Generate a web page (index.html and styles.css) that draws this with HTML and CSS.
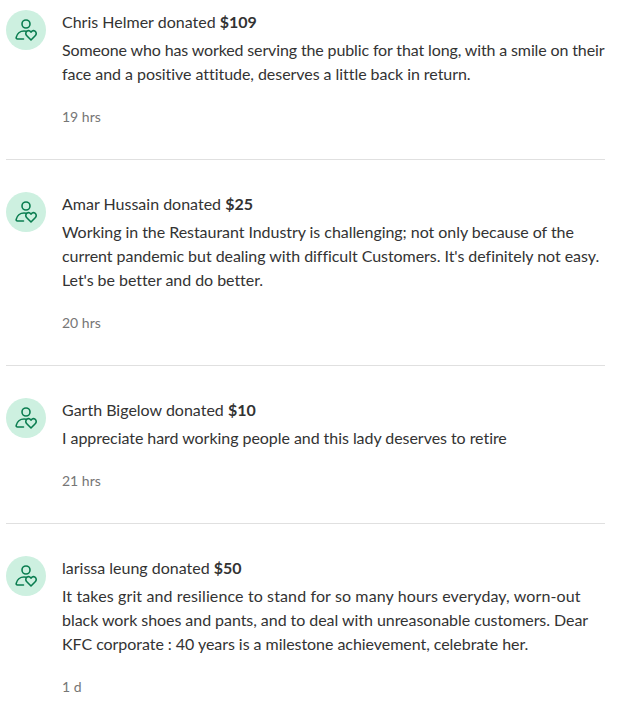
FILE: index.html
```html
<!DOCTYPE html>
<html lang="en">
<head>
    <meta charset="UTF-8">
    <title>Donations</title>
    <link rel="stylesheet" href="styles.css">
</head>
<body>
    <svg class="icon-defs" width="0" height="0">
        <symbol id="donor" viewBox="0 0 40 40">
            <circle cx="20" cy="14" r="4" />
            <path d="M17.500 29H11.500c-1 0-1.500-.7-1.300-1.600.8-3.600 3.900-6.400 7.800-6.400 1 0 1.600.1 2.300.3" />
            <path d="M25 30l-4.200-4.200c-1.500-1.500-1.300-3.700.2-4.700 1.500-1 3.200-.5 4 1.100.8-1.600 2.500-2.100 4-1.100 1.500 1 1.700 3.200.2 4.700z" />
        </symbol>
    </svg>

    <div class="list">
        <div class="donation">
            <div class="avatar"><svg><use href="#donor"></use></svg></div>
            <div class="body">
                <div class="title">Chris Helmer donated <b>$109</b></div>
                <p class="message"><span class="line tight">Someone who has worked serving the public for that long, with a smile on their</span> face and a positive attitude, deserves a little back in return.</p>
                <div class="time">19 hrs</div>
            </div>
        </div>

        <div class="donation">
            <div class="avatar"><svg><use href="#donor"></use></svg></div>
            <div class="body">
                <div class="title">Amar Hussain donated <b>$25</b></div>
                <p class="message">Working in the Restaurant Industry is challenging; not only because of the current pandemic but dealing with difficult Customers. It's definitely not easy. Let's be better and do better.</p>
                <div class="time">20 hrs</div>
            </div>
        </div>

        <div class="donation">
            <div class="avatar"><svg><use href="#donor"></use></svg></div>
            <div class="body">
                <div class="title">Garth Bigelow donated <b>$10</b></div>
                <p class="message">I appreciate hard working people and this lady deserves to retire</p>
                <div class="time">21 hrs</div>
            </div>
        </div>

        <div class="donation">
            <div class="avatar"><svg><use href="#donor"></use></svg></div>
            <div class="body">
                <div class="title">larissa leung donated <b>$50</b></div>
                <p class="message"><span class="line wide">It takes grit and resilience to stand for so many hours everyday, worn-out</span> black work shoes and pants, and to deal with unreasonable customers. Dear KFC corporate : 40 years is a milestone achievement, celebrate her.</p>
                <div class="time">1 d</div>
            </div>
        </div>
    </div>
</body>
</html>
```

FILE: styles.css
```css
* {
    box-sizing: border-box;
}

body {
    font-family: 'Lato', sans-serif;
    font-size: 16px;
    line-height: 24px;
    color: #333;
    background-color: #fff;
    margin: 0;
    overflow: hidden;
}

.icon-defs {
    position: absolute;
}

.list {
    width: 599px;
    margin-left: 6px;
    padding-top: 10px;
}

.donation {
    display: flex;
    gap: 16px;
    padding-bottom: 32px;
    margin-bottom: 32px;
    border-bottom: 1px solid #e0e0e0;
}

.donation:last-child {
    border-bottom: none;
    margin-bottom: 0;
}

.avatar {
    flex: none;
    width: 40px;
    height: 40px;
    border-radius: 50%;
    background-color: #cdf0e0;
}

.avatar svg {
    display: block;
    width: 40px;
    height: 40px;
    fill: none;
    stroke: #0a7d50;
    stroke-width: 1.600;
    stroke-linecap: round;
    stroke-linejoin: round;
}

.body {
    flex: 1;
    min-width: 0;
}

.title b {
    font-weight: 700;
}

.message {
    margin: 4px 0 0;
    letter-spacing: -0.05px;
}

.line {
    display: block;
    white-space: nowrap;
}

.tight {
    letter-spacing: -0.13px;
}

.wide {
    letter-spacing: 0.12px;
}

.time {
    margin-top: 21px;
    font-size: 14px;
    line-height: 20px;
    color: #767676;
}
```
